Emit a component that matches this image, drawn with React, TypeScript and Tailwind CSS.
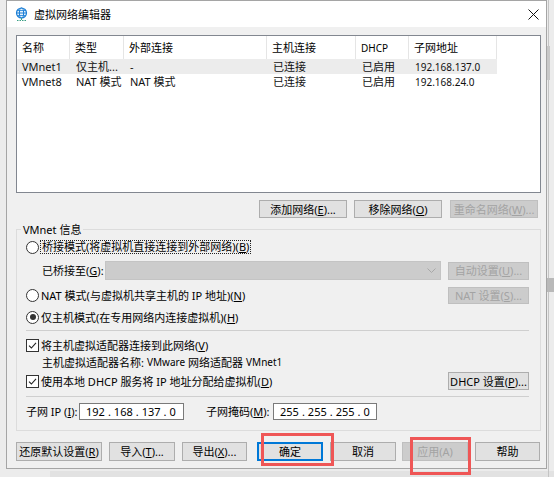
import React from "react";

const U = ({ c }: { c: string }) => (
  <span className="underline underline-offset-[1px]">{c}</span>
);

type BtnProps = {
  children: React.ReactNode;
  w: string;
  h?: string;
  disabled?: boolean;
  focus?: boolean;
  extra?: string;
};

function Btn({ children, w, h = "h-[19px]", disabled = false, focus = false, extra = "" }: BtnProps) {
  const tone = disabled
    ? "bg-[#cccccc] border-[#bfbfbf] text-[#a3a3a3]"
    : focus
    ? "bg-[#e1e1e1] border-[#0078d7] text-black shadow-[inset_0_0_0_1px_#0078d7]"
    : "bg-[#e1e1e1] border-[#adadad] text-black";
  return (
    <div
      className={`flex shrink-0 items-center justify-center whitespace-nowrap border text-[11px] leading-none ${w} ${h} ${tone} ${extra}`}
    >
      {children}
    </div>
  );
}

function Radio({ checked = false }: { checked?: boolean }) {
  return (
    <div className="flex h-[13px] w-[13px] shrink-0 items-center justify-center rounded-full border border-[#333333] bg-white">
      {checked && <div className="h-[6px] w-[6px] rounded-full bg-[#333333]" />}
    </div>
  );
}

function Check() {
  return (
    <div className="flex h-[13px] w-[13px] shrink-0 items-center justify-center border border-[#333333] bg-white">
      <svg width="9" height="9" viewBox="0 0 9 9">
        <path d="M1 4.6 L3.4 7 L8 1.8" fill="none" stroke="#222" strokeWidth="1.1" />
      </svg>
    </div>
  );
}

function IpBox({ octets, w }: { octets: string[]; w: string }) {
  return (
    <div className={`flex h-[17px] ${w} items-center gap-[3px] border border-[#7a7a7a] bg-white pl-[6px] text-[11px] leading-none text-black`}>
      {octets.map((o, i) => (
        <React.Fragment key={i}>
          <span>{o}</span>
          {i < 3 && <span>.</span>}
        </React.Fragment>
      ))}
    </div>
  );
}

const cols = [
  { w: "w-[53px]", h: "名称" },
  { w: "w-[54px]", h: "类型" },
  { w: "w-[143px]", h: "外部连接" },
  { w: "w-[89px]", h: "主机连接" },
  { w: "w-[53px]", h: "DHCP" },
  { w: "w-[88px]", h: "子网地址" },
];

const rows = [
  ["VMnet1", "仅主机...", "-", "已连接", "已启用", "192.168.137.0"],
  ["VMnet8", "NAT 模式", "NAT 模式", "已连接", "已启用", "192.168.24.0"],
];

export default function App() {
  return (
    <div className="relative h-[477px] w-[554px] overflow-hidden bg-[#ececec] font-['Noto_Sans','Noto_Sans_CJK_SC',sans-serif] text-black">
      {/* desktop background pieces */}
      <div className="absolute left-[50px] top-[471px] h-[6px] w-[504px] bg-[#e2e2e2]" />
      <div className="absolute left-[548px] top-0 h-[477px] w-[1px] bg-[#c4c4c4]" />
      <div className="absolute left-[547px] top-[46px] h-[34px] w-[3px] bg-[#c8c8c8]" />
      <div className="absolute left-[547px] top-[278px] h-[14px] w-[7px] bg-[#b9b9b9]" />

      {/* window */}
      <div className="absolute left-[6px] top-0 flex h-[469px] w-[541px] flex-col border border-[#a5a5a5] bg-[#f0f0f0]">
        {/* title bar */}
        <div className="flex h-[26px] shrink-0 items-center bg-white pl-[8px]">
          <svg width="13" height="15" viewBox="0 0 13 15" className="shrink-0">
            <circle cx="6.5" cy="6" r="5" fill="#e8f3fc" stroke="#1c7fd6" strokeWidth="1.2" />
            <ellipse cx="6.5" cy="6" rx="2.1" ry="5" fill="none" stroke="#1c7fd6" strokeWidth="1" />
            <line x1="1.5" y1="6" x2="11.5" y2="6" stroke="#1c7fd6" strokeWidth="1" />
            <line x1="2.3" y1="3.5" x2="10.7" y2="3.5" stroke="#1c7fd6" strokeWidth="0.8" />
            <line x1="2.3" y1="8.5" x2="10.7" y2="8.5" stroke="#1c7fd6" strokeWidth="0.8" />
            <line x1="6.5" y1="11" x2="6.5" y2="13" stroke="#3a9f84" strokeWidth="1" />
            <line x1="2" y1="13.5" x2="11" y2="13.5" stroke="#3a9f84" strokeWidth="1" strokeDasharray="1.5 1" />
          </svg>
          <span className="ml-[6px] text-[11px] leading-none">虚拟网络编辑器</span>
          <svg width="11" height="11" viewBox="0 0 11 11" className="ml-auto mr-[7px]">
            <path d="M0.5 0.5 L10.5 10.5 M10.5 0.5 L0.5 10.5" stroke="#111" strokeWidth="1" />
          </svg>
        </div>

        {/* body */}
        <div className="flex flex-1 flex-col pl-[9px] pr-[5px] pt-[8px]">
          {/* list */}
          <div className="h-[158px] border border-[#828790] bg-white">
            <div className="flex h-[23px]">
              {cols.map((c, i) => (
                <div
                  key={i}
                  className={`${c.w} flex items-center border-r border-[#e5e5e5] pl-[5px] ${
                    c.h === "DHCP" ? "text-[10px]" : "text-[11px]"
                  } leading-none`}
                >
                  {c.h}
                </div>
              ))}
            </div>
            {rows.map((r, ri) => (
              <div key={ri} className={`flex h-[15px] w-[480px] ${ri === 0 ? "bg-[#ececec]" : ""}`}>
                {r.map((cell, ci) => (
                  <div
                    key={ci}
                    className={`${cols[ci].w} flex items-center overflow-hidden whitespace-nowrap ${
                      ci === 0 ? "pl-[5px]" : "pl-[6px]"
                    } ${ci === 5 ? "text-[10px]" : "text-[11px]"} leading-none text-[#111111]`}
                  >
                    {cell}
                  </div>
                ))}
              </div>
            ))}
          </div>

          {/* list buttons */}
          <div className="mr-[3px] mt-[7px] flex justify-end gap-[7px]">
            <Btn w="w-[88px]" h="h-[18px]">
              添加网络(<U c="E" />)...
            </Btn>
            <Btn w="w-[88px]" h="h-[18px]">
              移除网络(<U c="O" />)
            </Btn>
            <Btn w="w-[88px]" h="h-[18px]" disabled extra="ml-[1px]">
              重命名网络(<U c="W" />)...
            </Btn>
          </div>

          {/* group */}
          <div className="relative mt-[11px] h-[202px] border border-[#dcdcdc] pl-[9px] pr-[11px] pt-[10px]">
            <span className="absolute -top-[8px] left-[4px] bg-[#f0f0f0] px-[2px] text-[11px] leading-[15px]">
              VMnet 信息
            </span>

            <div className="flex h-[14px] items-center">
              <Radio />
              <span className="ml-[1px] border border-dotted border-[#222] px-[1px] text-[11px] leading-[12px]">
                桥接模式(将虚拟机直接连接到外部网络)(<U c="B" />)
              </span>
            </div>

            <div className="mt-[7px] flex h-[19px] items-center pl-[16px]">
              <span className="w-[63px] whitespace-nowrap text-[11px] leading-none">
                已桥接至(<U c="G" />):
              </span>
              <div className="flex h-[19px] w-[336px] items-center justify-end border border-[#c4c4c4] bg-[#cccccc] pr-[4px]">
                <svg width="9" height="5" viewBox="0 0 9 5">
                  <path d="M0.5 0.5 L4.5 4.5 L8.5 0.5" fill="none" stroke="#a8a8a8" strokeWidth="1" />
                </svg>
              </div>
              <Btn w="w-[81px]" h="h-[18px]" disabled extra="ml-auto">
                自动设置(<U c="U" />)...
              </Btn>
            </div>

            <div className="mt-[7px] flex h-[17px] items-center">
              <Radio />
              <span className="ml-[2px] text-[11px] leading-none">
                NAT 模式(与虚拟机共享主机的 IP 地址)(<U c="N" />)
              </span>
              <Btn w="w-[81px]" h="h-[17px]" disabled extra="ml-auto">
                NAT 设置(<U c="S" />)...
              </Btn>
            </div>

            <div className="mt-[6px] flex h-[14px] items-center">
              <Radio checked />
              <span className="ml-[2px] text-[11px] leading-none">
                仅主机模式(在专用网络内连接虚拟机)(<U c="H" />)
              </span>
            </div>

            <div className="mt-[6px] h-px bg-[#cfcfcf]" />

            <div className="mt-[7px] flex h-[14px] items-center">
              <Check />
              <span className="ml-[2px] text-[11px] leading-none">
                将主机虚拟适配器连接到此网络(<U c="V" />)
              </span>
            </div>

            <div className="mt-[3px] flex h-[14px] items-center pl-[16px] text-[11px] leading-none">
              主机虚拟适配器名称:<span className="ml-[3px] text-[10px]">VMware</span>
              <span className="ml-[3px]">网络适配器</span>
              <span className="ml-[3px] text-[10px]">VMnet1</span>
            </div>

            <div className="mt-[3px] flex h-[18px] items-center">
              <Check />
              <span className="ml-[2px] text-[11px] leading-none">
                使用本地 DHCP 服务将 IP 地址分配给虚拟机(<U c="D" />)
              </span>
              <Btn w="w-[81px]" h="h-[18px]" extra="ml-auto">
                DHCP 设置(<U c="P" />)...
              </Btn>
            </div>

            <div className="mt-[6px] h-px bg-[#cfcfcf]" />

            <div className="mt-[6px] flex h-[17px] items-center">
              <span className="w-[53px] whitespace-nowrap text-[11px] leading-none">
                子网 IP (<U c="I" />):
              </span>
              <IpBox octets={["192", "168", "137", "0"]} w="w-[105px]" />
              <span className="ml-[22px] w-[67px] whitespace-nowrap text-[11px] leading-none">
                子网掩码(<U c="M" />):
              </span>
              <IpBox octets={["255", "255", "255", "0"]} w="w-[104px]" />
            </div>
          </div>

          {/* bottom buttons */}
          <div className="mt-[11px] flex">
            <Btn w="w-[86px]">
              还原默认设置(<U c="R" />)
            </Btn>
            <Btn w="w-[66px]" extra="ml-[7px]">
              导入(<U c="T" />)...
            </Btn>
            <Btn w="w-[65px]" extra="ml-[7px]">
              导出(<U c="X" />)...
            </Btn>
            <Btn w="w-[66px]" focus extra="ml-[10px]">
              确定
            </Btn>
            <Btn w="w-[66px]" extra="ml-[7px]">
              取消
            </Btn>
            <Btn w="w-[66px]" disabled extra="ml-[6px]">
              应用(A)
            </Btn>
            <Btn w="w-[65px]" extra="ml-[7px]">
              帮助
            </Btn>
          </div>
        </div>
      </div>

      {/* red annotation boxes */}
      <div className="absolute left-[261px] top-[433px] h-[33px] w-[73px] border-[3px] border-[#ef5656]" />
      <div className="absolute left-[410px] top-[437px] h-[38px] w-[61px] border-[3px] border-[#ef5656]" />
    </div>
  );
}
